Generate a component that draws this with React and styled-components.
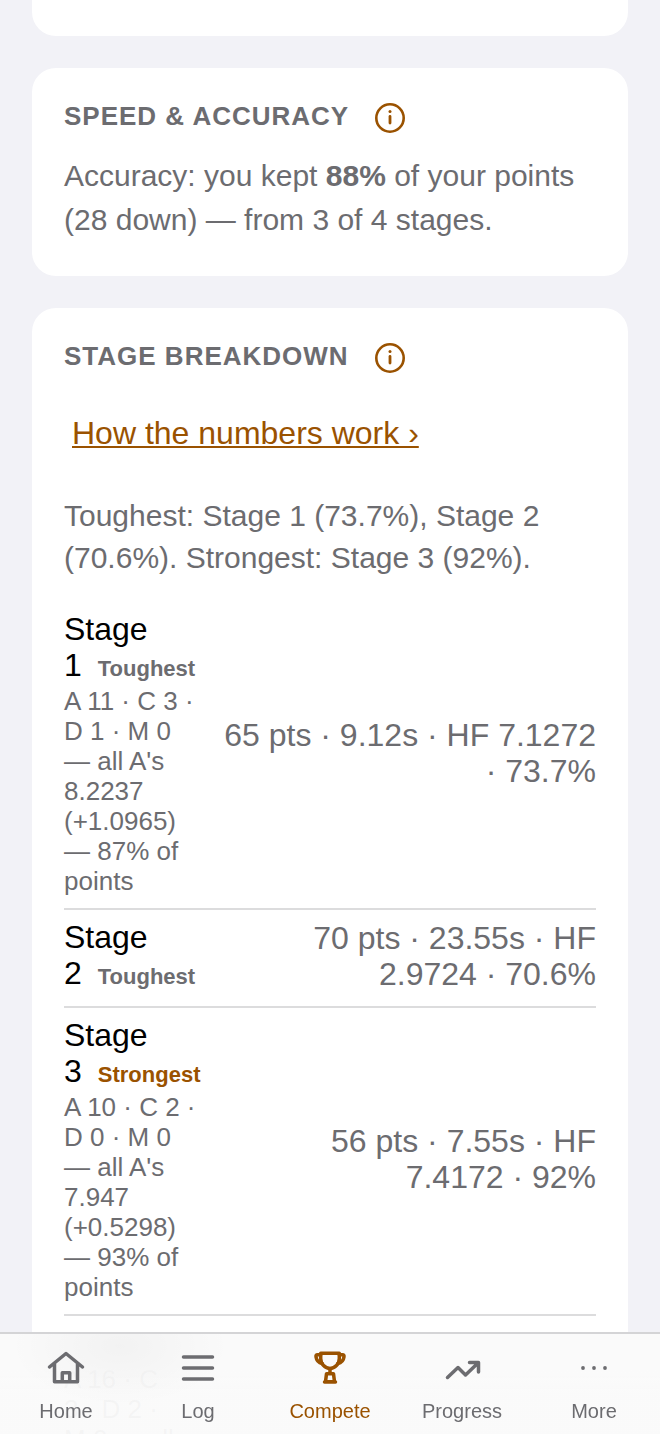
import React from 'react';
import styled, { createGlobalStyle } from 'styled-components';

const GlobalStyle = createGlobalStyle`
  *, *::before, *::after {
    box-sizing: border-box;
  }
  html {
    height: 100%;
    overflow: hidden;
  }
  body {
    margin: 0;
    height: 100%;
    background: #f2f2f7;
    color: #000;
    font-family: "Liberation Sans", Arial, sans-serif;
    font-size: 32px;
    line-height: 36px;
  }
  #root {
    height: 100%;
  }
`;

const stages = [
  {
    id: 1,
    tag: 'Toughest',
    hits: "A 11 · C 3 · D 1 · M 0 — all A's 8.2237 (+1.0965) — 87% of points",
    result: '65 pts · 9.12s · HF 7.1272 · 73.7%',
  },
  { id: 2, tag: 'Toughest', result: '70 pts · 23.55s · HF 2.9724 · 70.6%' },
  {
    id: 3,
    tag: 'Strongest',
    hits: "A 10 · C 2 · D 0 · M 0 — all A's 7.947 (+0.5298) — 93% of points",
    result: '56 pts · 7.55s · HF 7.4172 · 92%',
  },
  {
    id: 4,
    hits: "A 16 · C 3 · D 2 · M 0 — all A's 6.5217 (+0.8696) — 87% of points",
    result: '91 pts · 16.10s · HF 5.6521 · 81.4%',
  },
];

const tabs = [
  { label: 'Home', Icon: HomeIcon },
  { label: 'Log', Icon: LogIcon },
  { label: 'Compete', Icon: TrophyIcon, active: true },
  { label: 'Progress', Icon: ProgressIcon },
  { label: 'More', Icon: MoreIcon },
];

function HomeIcon() {
  return (
    <Glyph viewBox="0 0 44 44" aria-hidden="true">
      <path d="M5.500 21 22 7.500 38.500 21M10.500 17v18.700h23V17M18.300 35.700v-9h7.400v9" />
    </Glyph>
  );
}

function LogIcon() {
  return (
    <Glyph viewBox="0 0 44 44" aria-hidden="true">
      <path d="M7.500 11h29M7.500 22h29M7.500 33h29" />
    </Glyph>
  );
}

function TrophyIcon() {
  return (
    <Glyph viewBox="0 0 44 44" aria-hidden="true">
      <path d="M12.700 7.300h18.600v5.200c0 5.500-4.500 10-9.300 10s-9.300-4.500-9.300-10z" />
      <path d="M12.700 8.800H9.500c-1.300 0-1.700.7-1.500 2 .4 3.500 2.400 5.900 6.300 6.700M31.300 8.800h3.200c1.300 0 1.700.7 1.500 2-.4 3.500-2.400 5.900-6.300 6.700" />
      <path d="M22 22.500v5M18.500 27.700h7l1 8h-9zM16.500 36h11" />
    </Glyph>
  );
}

function ProgressIcon() {
  return (
    <Glyph viewBox="0 0 44 44" aria-hidden="true">
      <path d="M7.500 31.500 18 21.500l7.500 7.500L38 17M29.500 16.500h9V26" />
    </Glyph>
  );
}

function MoreIcon() {
  return (
    <Glyph viewBox="0 0 44 44" aria-hidden="true">
      <g fill="currentColor" stroke="none">
        <circle cx="11" cy="22" r="1.900" />
        <circle cx="22" cy="22" r="1.900" />
        <circle cx="33" cy="22" r="1.900" />
      </g>
    </Glyph>
  );
}

function InfoIcon() {
  return (
    <svg width="30" height="30" viewBox="1 1 30 30" fill="none" stroke="currentColor" aria-hidden="true">
      <circle cx="16" cy="16" r="13.700" strokeWidth="2.600" />
      <path d="M16 14.500v6.500" strokeWidth="2.800" strokeLinecap="round" />
      <circle cx="16" cy="9.500" r="1.500" fill="currentColor" stroke="none" />
    </svg>
  );
}

function CardHeader({ title }) {
  return (
    <Header>
      <Title>{title}</Title>
      <InfoButton type="button" aria-label={`About ${title}`}>
        <InfoIcon />
      </InfoButton>
    </Header>
  );
}

function StageRow({ id, tag, hits, result }) {
  return (
    <Row>
      <StageCell>
        <StageName>
          Stage {id}
          {tag && <Tag $strong={tag === 'Strongest'}>{tag}</Tag>}
        </StageName>
        {hits && <Hits>{hits}</Hits>}
      </StageCell>
      <Result>{result}</Result>
    </Row>
  );
}

function App() {
  return (
    <>
      <GlobalStyle />
      <Content>
        <CardEnd />
        <Card>
          <CardHeader title="Speed &amp; Accuracy" />
          <Accuracy>
            Accuracy: you kept <strong>88%</strong> of your points (28 down) — from 3 of 4 stages.
          </Accuracy>
        </Card>
        <Card>
          <CardHeader title="Stage Breakdown" />
          <HelpLink href="#numbers">How the numbers work ›</HelpLink>
          <Summary>
            Toughest: Stage 1 (73.7%), Stage 2 (70.6%). Strongest: Stage 3 (92%).
          </Summary>
          <Stages>
            {stages.map(stage => (
              <StageRow key={stage.id} {...stage} />
            ))}
          </Stages>
        </Card>
      </Content>
      <TabBar>
        {tabs.map(({ label, Icon, active }) => (
          <Tab key={label} type="button" $active={active}>
            <Icon />
            <span>{label}</span>
          </Tab>
        ))}
      </TabBar>
    </>
  );
}

const Content = styled.main`
  display: flex;
  flex-direction: column;
  gap: 32px;
  padding: 0 32px;
`;

const Card = styled.section`
  padding: 32px;
  border-radius: 24px;
  background: #fff;
`;

const CardEnd = styled.div`
  height: 36px;
  border-radius: 0 0 24px 24px;
  background: #fff;
`;

const Header = styled.header`
  display: flex;
  align-items: flex-start;
  gap: 26px;
  height: 36px;
`;

const Title = styled.h2`
  margin: 0;
  color: #6c6c70;
  font-size: 26px;
  line-height: 32px;
  font-weight: bold;
  letter-spacing: 1px;
  text-transform: uppercase;
`;

const InfoButton = styled.button`
  display: flex;
  align-self: center;
  padding: 0;
  border: 0;
  background: none;
  color: #9a5200;
`;

const Accuracy = styled.p`
  margin: 18px 0 2px;
  color: #6c6c70;
  font-size: 30px;
  line-height: 44px;
`;

const HelpLink = styled.a`
  display: block;
  width: fit-content;
  margin-top: 39px;
  padding: 0 8px;
  color: #9a5200;
  text-decoration-thickness: 2px;
  text-underline-offset: 2px;
`;

const Summary = styled.p`
  margin: 44px 0 32px;
  color: #6c6c70;
  font-size: 30px;
  line-height: 42px;
`;

const Stages = styled.ul`
  margin: 0;
  padding: 0;
  list-style: none;
`;

const Row = styled.li`
  display: flex;
  align-items: center;
  gap: 24px;
  padding-bottom: 12px;
  & + & {
    padding-top: 9px;
    border-top: 2px solid #dcdcdd;
  }
`;

const StageCell = styled.div`
  flex: 1 1 0;
`;

const StageName = styled.div`
  padding-bottom: 3px;
`;

const Tag = styled.span`
  margin-left: 16px;
  color: ${({ $strong }) => ($strong ? '#9a5200' : '#6c6c70')};
  font-size: 22px;
  line-height: 22px;
  font-weight: bold;
`;

const Hits = styled.div`
  color: #6c6c70;
  font-size: 26px;
  line-height: 30px;
`;

const Result = styled.div`
  padding-bottom: 2px;
  color: #6c6c70;
  text-align: right;
`;

/* the upper part is opaque with a soft shade, rows show faintly through the rest */
const TabBar = styled.nav`
  position: fixed;
  left: 0;
  right: 0;
  bottom: 0;
  display: flex;
  height: 102px;
  border-top: 2px solid #d4d4d6;
  background:
    radial-gradient(110px 60px at 120px 12px, rgba(0, 0, 0, 0.03), transparent),
    linear-gradient(#fafafa 34px, rgba(250, 250, 250, 0.97) 38px, rgba(250, 250, 250, 0.96) 60px);
`;

const Tab = styled.button`
  flex: 1;
  display: flex;
  flex-direction: column;
  align-items: center;
  gap: 9px;
  padding: 12px 0 0;
  border: 0;
  background: none;
  color: ${({ $active }) => ($active ? '#9a5200' : '#6c6c70')};
  font-family: inherit;
  font-size: 20px;
  line-height: 24px;
`;

const Glyph = styled.svg`
  width: 44px;
  height: 44px;
  fill: none;
  stroke: currentColor;
  stroke-width: 3.500;
  stroke-linecap: round;
  stroke-linejoin: round;
`;

export default App;
